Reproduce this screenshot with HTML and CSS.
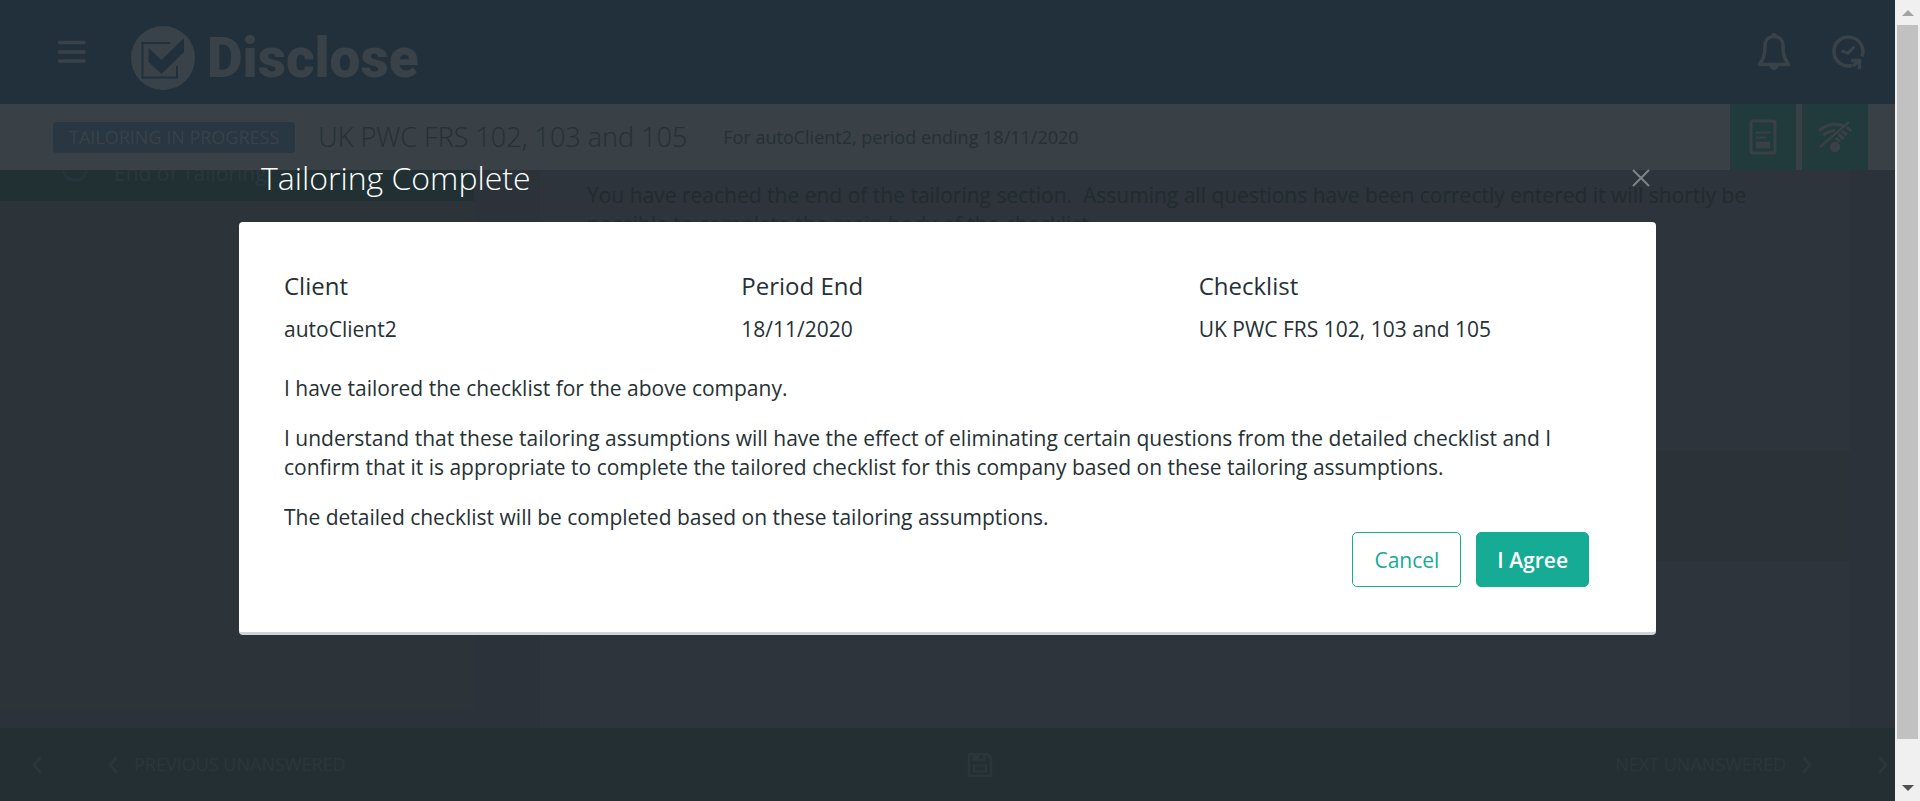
FILE: index.html
```html
<!DOCTYPE html>
<html lang="en">
<head>
<meta charset="utf-8">
<title>Disclose</title>
<link rel="stylesheet" href="styles.css">
</head>
<body>
<div class="window">
  <div class="app">
    <header class="topbar">
      <button class="icon-button menu-button" aria-label="Menu">
        <svg width="30" height="24" viewBox="0 0 30 24" fill="none" stroke="currentColor" stroke-width="3.500" stroke-linecap="round"><path d="M3.500 2.500H28M3.500 12H28M3.500 21H28"/></svg>
      </button>
      <a class="brand" href="#">
        <svg width="64" height="64" viewBox="0 0 64 64" fill="none">
          <circle cx="32" cy="32" r="32" fill="#394248"/>
          <path d="M39 17H11.500V51.500H46V40" stroke="#22303c" stroke-width="2"/>
          <path d="M17.500 22L30.500 34L53 12V26L30.500 48L17.500 36Z" fill="#22303c"/>
        </svg>
        <span class="brand-name">Disclose</span>
      </a>
      <div class="topbar-actions">
        <button class="icon-button" aria-label="Notifications">
          <svg width="34" height="38" viewBox="0 0 34 38" fill="none" stroke="currentColor" stroke-width="3.500" stroke-linejoin="round"><path d="M17 3.500C10.500 3.500 8 8 8 13C8 23 6 26 2.500 31.500H31.500C28 26 26 23 26 13C26 8 23.500 3.500 17 3.500Z"/><path d="M14 3a3 3 0 0 1 6 0ZM12.500 32.500h9a4.500 4.500 0 0 1-9 0Z" fill="currentColor" stroke="none"/></svg>
        </button>
        <button class="icon-button" aria-label="Recent activity">
          <svg width="34" height="34" viewBox="0 0 34 34" fill="none" stroke="currentColor" stroke-width="3.500"><path d="M31 21.500A14.500 14.500 0 1 0 21 30.500"/><path d="M10.500 16L17 18L23.500 11.500" stroke-width="3"/><path d="M20 25.500H28.500V34M28.500 25.500L22 31" stroke-width="3.500"/></svg>
        </button>
      </div>
    </header>

    <div class="subbar">
      <span class="status">TAILORING IN PROGRESS</span>
      <h1 class="checklist-name">UK PWC FRS 102, 103 and 105</h1>
      <span class="period">For autoClient2, period ending 18/11/2020</span>
      <div class="tools">
        <button class="tool" aria-label="Notes">
          <svg width="28" height="36" viewBox="0 0 28 36" fill="none" stroke="currentColor"><rect x="2" y="2" width="24" height="32" rx="2" stroke-width="3"/><path d="M7 13.500H21M7 18.500H17" stroke-width="2"/><rect x="7" y="22.500" width="14" height="7" fill="currentColor" stroke="none"/></svg>
        </button>
        <button class="tool" aria-label="Offline">
          <svg width="36" height="34" viewBox="0 0 36 34" fill="none" stroke="currentColor"><circle cx="18" cy="27" r="5.200" fill="currentColor" stroke="none"/><path d="M2 10.500Q13 1 26 5.500M6 15.500Q11 11 18 10.500M29.500 7L34.500 11M25 11L30 15M21.500 14L26.500 19M18.500 18L23 21.500" stroke-width="3.200"/><path d="M3 27L32 2" stroke-width="2.500"/></svg>
        </button>
      </div>
    </div>

    <main class="content">
      <nav class="sections">
        <a class="section-link" href="#"><span class="section-mark"></span>End of Tailoring</a>
      </nav>
      <section class="question">
        <p class="question-text">You have reached the end of the tailoring section.&nbsp; Assuming all questions have been correctly entered it will shortly be possible to complete the main body of the checklist.</p>
        <div class="answer"></div>
      </section>
    </main>

    <footer class="footer">
      <button class="nav-button" aria-label="Previous">
        <svg width="10" height="18" viewBox="0 0 10 18" fill="none" stroke="currentColor" stroke-width="3" stroke-linecap="round"><path d="M8 2L2 9L8 16"/></svg>
      </button>
      <button class="nav-button nav-unanswered">
        <svg width="10" height="18" viewBox="0 0 10 18" fill="none" stroke="currentColor" stroke-width="3" stroke-linecap="round"><path d="M8 2L2 9L8 16"/></svg>
        PREVIOUS UNANSWERED
      </button>
      <button class="nav-button save" aria-label="Save">
        <svg width="26" height="26" viewBox="0 0 26 26" fill="none" stroke="currentColor" stroke-width="2.500"><path d="M2 2H20L24 6V24H2Z" stroke-linejoin="round"/><path d="M6.500 2V8H17V2"/><path d="M7 2H12V8H7Z" fill="currentColor" stroke="none"/><rect x="7" y="13.500" width="12" height="6" stroke-width="2"/></svg>
      </button>
      <button class="nav-button nav-unanswered">
        NEXT UNANSWERED
        <svg width="10" height="18" viewBox="0 0 10 18" fill="none" stroke="currentColor" stroke-width="3" stroke-linecap="round"><path d="M2 2L8 9L2 16"/></svg>
      </button>
      <button class="nav-button" aria-label="Next">
        <svg width="10" height="18" viewBox="0 0 10 18" fill="none" stroke="currentColor" stroke-width="3" stroke-linecap="round"><path d="M2 2L8 9L2 16"/></svg>
      </button>
    </footer>

    <div class="overlay">
      <div class="dialog" role="dialog" aria-labelledby="dialog-title">
        <div class="dialog-head">
          <h2 class="dialog-title" id="dialog-title">Tailoring Complete</h2>
          <button class="close" aria-label="Close">
            <svg width="18" height="18" viewBox="0 0 18 18" stroke="currentColor" stroke-width="2"><path d="M1 1L17 17M17 1L1 17"/></svg>
          </button>
        </div>
        <div class="dialog-body">
          <dl class="facts">
            <div><dt>Client</dt><dd>autoClient2</dd></div>
            <div><dt>Period End</dt><dd>18/11/2020</dd></div>
            <div><dt>Checklist</dt><dd>UK PWC FRS 102, 103 and 105</dd></div>
          </dl>
          <div class="statement">
            <p>I have tailored the checklist for the above company.</p>
            <p>I understand that these tailoring assumptions will have the effect of eliminating certain questions from the detailed checklist and I confirm that it is appropriate to complete the tailored checklist for this company based on these tailoring assumptions.</p>
            <p>The detailed checklist will be completed based on these tailoring assumptions.</p>
          </div>
          <div class="actions">
            <button class="button">Cancel</button>
            <button class="button button-primary">I Agree</button>
          </div>
        </div>
      </div>
    </div>
  </div>
  <div class="scrollbar" aria-hidden="true">
    <svg class="arrow" width="12" height="6" viewBox="0 0 12 6" fill="#a3a3a3"><path d="M6 0L12 6H0Z"/></svg>
    <div class="thumb"></div>
    <svg class="arrow" width="12" height="6" viewBox="0 0 12 6" fill="#505050"><path d="M0 0H12L6 6Z"/></svg>
  </div>
</div>
</body>
</html>
```
FILE: styles.css
```css
* { box-sizing: border-box; }
body {
  margin: 0;
  font-family: "Open Sans", "Noto Sans", sans-serif;
  font-size: 21px;
  line-height: 29px;
  color: #253135;
}
h1, h2, p, dl, dd { margin: 0; }
button {
  margin: 0;
  padding: 0;
  border: 0;
  background: none;
  color: inherit;
  font: inherit;
}
a { color: inherit; text-decoration: none; }
svg { display: block; flex: none; }

.window { display: flex; height: 100vh; overflow: hidden; }
.app {
  position: relative;
  flex: 1;
  min-width: 0;
  display: flex;
  flex-direction: column;
  background: #2c333a;
}

.topbar {
  flex: none;
  display: flex;
  align-items: center;
  height: 104px;
  padding: 0 30px 1px 56px;
  background: #22303c;
  color: #394248;
}
.brand {
  display: flex;
  align-items: center;
  gap: 12px;
  margin-left: 45px;
  padding-top: 12px;
}
.brand-name {
  font-family: Roboto, sans-serif;
  font-size: 55px;
  line-height: 64px;
  font-weight: 900;
}
.topbar-actions {
  display: flex;
  align-items: center;
  gap: 40px;
  margin-left: auto;
}

.subbar {
  flex: none;
  display: flex;
  align-items: center;
  height: 66px;
  padding: 0 27px 0 53px;
  background: #394046;
  color: #253135;
}
.status {
  padding: 0 16px 1px;
  border-radius: 4px;
  background: #293742;
  color: #394248;
  font-size: 18px;
  line-height: 30px;
}
.checklist-name {
  margin-left: 23px;
  padding-bottom: 1px;
  font-size: 27px;
  font-weight: 300;
}
.period { margin-left: 36px; font-size: 18px; }
.tools { display: flex; gap: 6px; margin-left: auto; }
.tool {
  display: grid;
  place-items: center;
  width: 66px;
  height: 66px;
  background: #213a3c;
  color: #394046;
}

.content {
  flex: 1;
  display: grid;
  grid-template-columns: 474px 1fr;
  column-gap: 66px;
  min-height: 0;
  padding-right: 45px;
  overflow: hidden;
  background: #2b3239;
}
.sections { margin-bottom: 18px; background: #2c343a; }
.section-link {
  display: flex;
  align-items: flex-end;
  gap: 26px;
  height: 31px;
  padding: 0 62px 13px;
  overflow: hidden;
  background: #203033;
  color: #2b373c;
}
.section-mark {
  width: 26px;
  height: 26px;
  margin-bottom: 6px;
  border: 3px solid #24343a;
  border-radius: 50%;
}
.question { padding-top: 11px; background: #2d343b; }
.question-text { padding: 0 64px 0 47px; color: #212c2f; }
.answer { height: 110px; margin-top: 212px; background: #2b3238; }

.footer {
  flex: none;
  display: flex;
  align-items: center;
  height: 73px;
  padding: 0 7px 0 32px;
  background: #242f33;
  color: #2b363a;
  font-size: 18px;
}
.nav-button { flex: none; }
.nav-unanswered { display: flex; align-items: center; gap: 16px; }
.nav-button:first-child { margin-right: 66px; }
.nav-button:last-child { margin-left: 66px; }
.save { margin: 0 auto; }

.overlay { position: absolute; inset: 0; padding: 156px 239px 0; }
.dialog-head {
  display: flex;
  align-items: center;
  justify-content: space-between;
  height: 66px;
  padding: 0 6px 23px 22px;
  color: #fff;
}
.dialog-title { font-size: 32px; line-height: 43px; font-weight: 300; }
.close { color: #7c868a; }
.dialog-body {
  padding: 47px 0 45px 45px;
  border-bottom: 3px solid #ced4d7;
  border-radius: 4px;
  background: #fff;
}
.facts { display: grid; grid-template-columns: repeat(3, 1fr); }
.facts dt { font-size: 24px; line-height: 34px; }
.facts dd { margin-top: 12px; }
.statement { margin: 30px 66px 0 0; }
.statement p + p { margin-top: 21px; }
.actions {
  display: flex;
  justify-content: flex-end;
  gap: 15px;
  padding-right: 67px;
}
.button {
  height: 55px;
  padding: 1px 21px 0;
  border: 1px solid #15ab95;
  border-radius: 5px;
  color: #15ab95;
  font-weight: 500;
}
.button-primary { padding: 1px 20px 0; background: #15ab95; color: #fff; font-weight: 600; }

.scrollbar {
  flex: none;
  display: flex;
  flex-direction: column;
  align-items: center;
  width: 25px;
  padding: 10px 2px;
  background: #f0f0f0;
}
.thumb { width: 21px; height: 714px; margin: 9px 0 auto; background: #c1c1c1; }
```
